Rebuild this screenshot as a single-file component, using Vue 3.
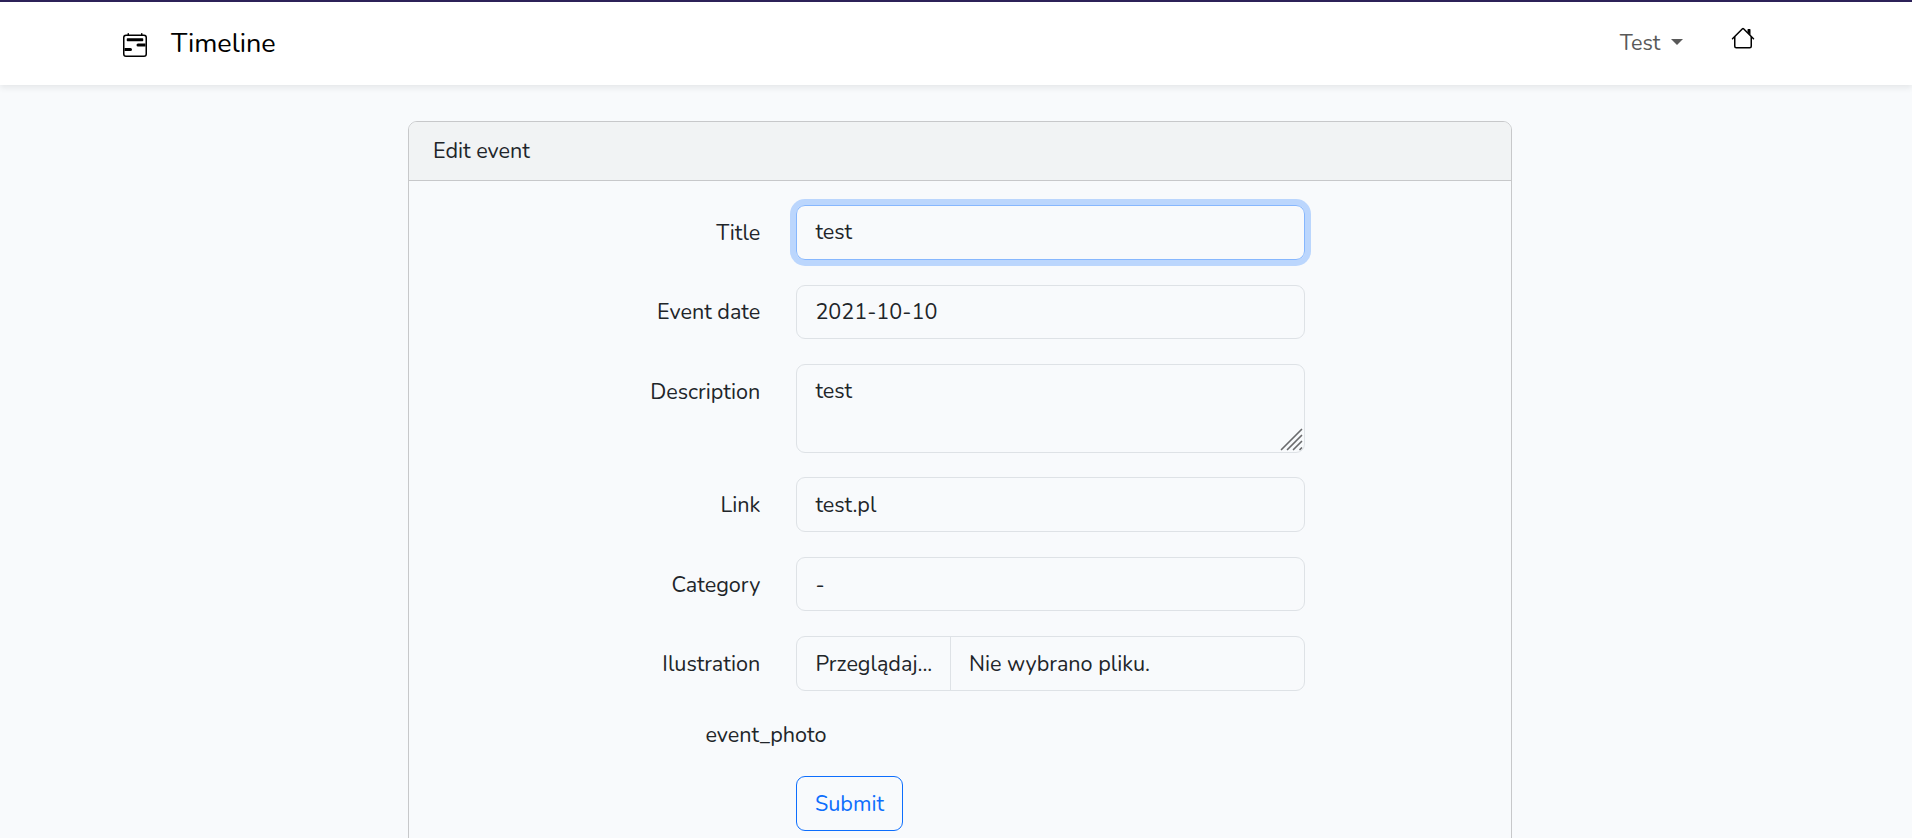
<script setup>
const eventForm = {
  title: 'test',
  date: '2021-10-10',
  description: 'test',
  link: 'test.pl',
  category: '-',
}
</script>

<template>
  <div class="page">
    <nav class="navbar">
      <a class="brand">
        <svg class="icon" viewBox="0 0 16 16" fill="currentColor">
          <path d="M3.5 0a.5.5 0 0 1 .5.5V1h8V.5a.5.5 0 0 1 1 0V1h1a2 2 0 0 1 2 2v11a2 2 0 0 1-2 2H2a2 2 0 0 1-2-2V3a2 2 0 0 1 2-2h1V.5a.5.5 0 0 1 .5-.5zM2 2a1 1 0 0 0-1 1v11a1 1 0 0 0 1 1h12a1 1 0 0 0 1-1V3a1 1 0 0 0-1-1H2z" />
          <path d="M2.5 4a.5.5 0 0 1 .5-.5h10a.5.5 0 0 1 .5.5v1a.5.5 0 0 1-.5.5H3a.5.5 0 0 1-.5-.5V4zM9 8a1 1 0 0 1 1-1h5v2h-5a1 1 0 0 1-1-1zm-8 2h4a1 1 0 1 1 0 2H1v-2z" />
        </svg>
        <span class="brand-name">Timeline</span>
      </a>
      <div class="nav-links">
        <a class="user"><span>Test</span><i class="caret"></i></a>
        <svg class="icon home" viewBox="0 0 16 16" fill="currentColor">
          <path fill-rule="evenodd" d="M2 13.5V7h1v6.5a.5.5 0 0 0 .5.5h9a.5.5 0 0 0 .5-.5V7h1v6.5a1.5 1.5 0 0 1-1.5 1.5h-9A1.5 1.5 0 0 1 2 13.5zm11-11V6l-2-2V2.5a.5.5 0 0 1 .5-.5h1a.5.5 0 0 1 .5.5z" />
          <path fill-rule="evenodd" d="M7.293 1.5a1 1 0 0 1 1.414 0l6.647 6.646a.5.5 0 0 1-.708.708L8 2.207 1.354 8.854a.5.5 0 1 1-.708-.708L7.293 1.5z" />
        </svg>
      </div>
    </nav>

    <main class="card">
      <header class="card-header">Edit event</header>
      <form class="card-body" @submit.prevent>
        <div class="row">
          <label>Title</label>
          <div class="control focused">{{ eventForm.title }}</div>
        </div>
        <div class="row">
          <label>Event date</label>
          <div class="control">{{ eventForm.date }}</div>
        </div>
        <div class="row area-row">
          <label>Description</label>
          <div class="control">
            {{ eventForm.description }}
            <svg class="grip" viewBox="0 0 24 24" fill="none" stroke="#6a6b6d" stroke-width="1.7" stroke-linecap="round">
              <path d="M1.5 21.500 21.500 1.500M7.500 21.500 21.500 7.500M13.500 21.500 21.500 13.500M20 21.500 21.500 20" />
            </svg>
          </div>
        </div>
        <div class="row">
          <label>Link</label>
          <div class="control low">{{ eventForm.link }}</div>
        </div>
        <div class="row">
          <label>Category</label>
          <div class="control low">{{ eventForm.category }}</div>
        </div>
        <div class="row">
          <label>Ilustration</label>
          <div class="control low file">
            <span class="browse">Przeglądaj...</span>
            <span>Nie wybrano pliku.</span>
          </div>
        </div>
        <div class="photo">event_photo</div>
        <button class="submit" type="submit">Submit</button>
      </form>
    </main>
  </div>
</template>

<style>
body {
  margin: 0;
  background: #f8fafc;
}
</style>

<style scoped>
.page {
  box-sizing: border-box;
  height: 838px;
  overflow: hidden;
  border-top: 2px solid #2c2158;
  background: #f8fafc;
  color: #212529;
  font: 21.6px/34.56px Nunito, Lato, "Noto Sans", sans-serif;
  white-space: nowrap;
}
.page * {
  box-sizing: border-box;
}
.navbar {
  display: flex;
  justify-content: space-between;
  height: 83px;
  padding: 0 157px 0 123px;
  background: #fff;
  box-shadow: 0 3px 6px rgba(0, 0, 0, 0.075);
}
.icon {
  display: block;
  width: 24px;
  height: 24px;
  color: #000;
}
.brand {
  display: flex;
  gap: 24px;
  padding-top: 31px;
  color: #000;
  font-size: 27px;
}
.brand-name {
  margin-top: -6px;
}
.nav-links {
  display: flex;
  color: #595959;
}
.user {
  display: flex;
  padding-top: 24px;
}
.caret {
  width: 12px;
  height: 6px;
  margin: 13px 48px 0 10.7px;
  background: #595959;
  clip-path: polygon(0 0, 100% 0, 50% 100%);
}
.home {
  margin-top: 24px;
}
.card {
  width: 1104px;
  height: 760px;
  margin: 36px 0 0 408px;
  border: 1px solid #c7c8ca;
  border-radius: 9px;
}
.card-header {
  height: 59px;
  padding: 12px 24px;
  border-bottom: 1px solid #c7c8ca;
  border-radius: 8px 8px 0 0;
  background: #f1f3f4;
}
.card-body {
  padding: 24px 0 0;
}
.row {
  display: grid;
  grid-template-columns: 351.3px 509px;
  gap: 35.7px;
  height: 54.56px;
  margin-bottom: 25px;
}
label {
  padding-top: 10.9px;
  text-align: right;
}
.control {
  position: relative;
  display: flex;
  padding: 9px 18px 0 18.4px;
  border: 1px solid #dee2e6;
  border-radius: 9px;
}
.low {
  padding-top: 9.9px;
}
.focused {
  border-color: #86b7fe;
  box-shadow: 0 0 0 6px #bbd6fd;
}
.area-row {
  height: 89px;
  margin-bottom: 24.1px;
}
.grip {
  position: absolute;
  right: 0;
  bottom: 0;
  width: 24px;
  height: 24px;
}
.file {
  padding-left: 0;
}
.browse {
  width: 154px;
  margin: -9.9px 18px 0 0;
  padding: 9.9px 0 0 18.4px;
  border-right: 1px solid #dee2e6;
}
.photo {
  margin: 0 0 0 296.5px;
  padding-top: 2px;
}
.submit {
  display: block;
  height: 55px;
  width: 107px;
  margin: 23.6px 0 0 387px;
  padding: 2px 0 0;
  border: 1px solid #0d6efd;
  border-radius: 9px;
  background: transparent;
  color: #0d6efd;
  font: inherit;
}
</style>
